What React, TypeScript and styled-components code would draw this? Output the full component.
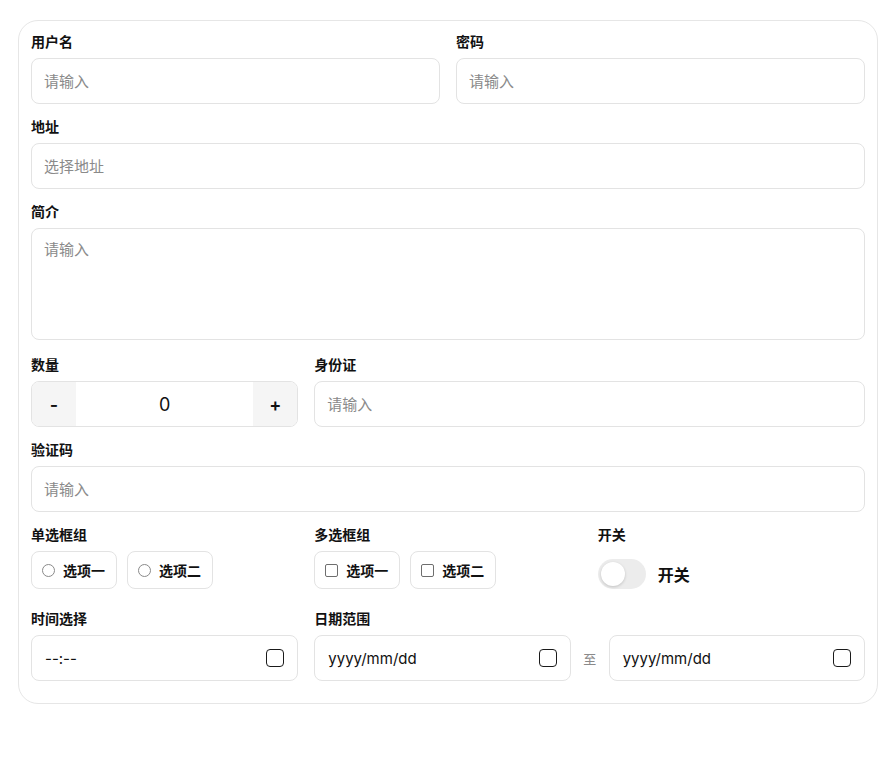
import React from "react";
import styled, { createGlobalStyle } from "styled-components";

const GlobalStyle = createGlobalStyle`
  html, body { margin: 0; padding: 0; background: #ffffff; }
  body {
    font-family: "Inter", "Noto Sans CJK SC", "Noto Sans", sans-serif;
    color: #111111;
  }
  * { box-sizing: border-box; }
  input::placeholder, textarea::placeholder { color: #8a8a8a; }
`;

const Page = styled.div`
  padding: 20px 18px;
`;

const Card = styled.form`
  width: 860px;
  border: 1px solid #e6e6e6;
  border-radius: 20px;
  padding: 12px 12px 22px;
  display: flex;
  flex-direction: column;
  gap: 14px;
`;

const Row = styled.div<{ $cols: string }>`
  display: grid;
  grid-template-columns: ${(p) => p.$cols};
  column-gap: 16px;
`;

const Field = styled.div<{ $span?: number }>`
  display: flex;
  flex-direction: column;
  min-width: 0;
  grid-column: span ${(p) => p.$span ?? 1};
`;

const Label = styled.label`
  font-size: 14px;
  line-height: 18px;
  font-weight: 700;
  margin-bottom: 7px;
  color: #111;
`;

const TextInput = styled.input`
  height: 46px;
  width: 100%;
  border: 1px solid #e3e3e3;
  border-radius: 8px;
  padding: 0 12px;
  font-family: inherit;
  font-size: 15px;
  color: #111;
  outline: none;
  background: #fff;
`;

const TextArea = styled.textarea`
  display: block;
  height: 112px;
  width: 100%;
  border: 1px solid #e3e3e3;
  border-radius: 8px;
  padding: 11px 12px;
  font-family: inherit;
  font-size: 15px;
  line-height: 20px;
  resize: none;
  outline: none;
  margin-bottom: 2px;
`;

const Stepper = styled.div`
  display: flex;
  height: 46px;
  border: 1px solid #e3e3e3;
  border-radius: 8px;
  overflow: hidden;
`;

const StepButton = styled.button`
  width: 44px;
  border: none;
  background: #f5f5f5;
  font-family: "Inter", sans-serif;
  font-size: 18px;
  font-weight: 600;
  color: #111;
  padding: 0;
`;

const StepValue = styled.input`
  flex: 1;
  min-width: 0;
  border: none;
  text-align: center;
  font-family: "Inter", sans-serif;
  font-size: 18px;
  color: #111;
  outline: none;
`;

const OptionList = styled.div`
  display: flex;
  gap: 10px;
`;

const Option = styled.label`
  height: 38px;
  display: flex;
  align-items: center;
  gap: 8px;
  padding: 0 11px 0 10px;
  border: 1px solid #e3e3e3;
  border-radius: 8px;
  font-size: 14px;
  font-weight: 700;
  color: #111;
`;

const RadioMark = styled.span`
  width: 13px;
  height: 13px;
  border-radius: 50%;
  border: 1px solid #8a8a8a;
  background: #fff;
`;

const CheckMark = styled.span`
  width: 13px;
  height: 13px;
  border-radius: 2px;
  border: 1px solid #6e6e6e;
  background: #fff;
`;

const SwitchWrap = styled.div`
  display: flex;
  align-items: center;
  gap: 12px;
  height: 45px;
  padding-top: 1px;
`;

const Track = styled.span`
  position: relative;
  width: 48px;
  height: 30px;
  border-radius: 15px;
  background: #ececec;
`;

const Thumb = styled.span`
  position: absolute;
  left: 3px;
  top: 3px;
  width: 24px;
  height: 24px;
  border-radius: 50%;
  background: #fff;
  box-shadow: 0 1px 3px rgba(0, 0, 0, 0.18);
`;

const SwitchText = styled.span`
  font-size: 16px;
  font-weight: 700;
  color: #111;
`;

const PickerBox = styled.div`
  flex: 1;
  height: 46px;
  display: flex;
  align-items: center;
  justify-content: space-between;
  border: 1px solid #e3e3e3;
  border-radius: 8px;
  padding: 0 13px 0 13px;
  font-family: "Inter", sans-serif;
  font-size: 15px;
  color: #111;
`;

const PickerIcon = styled.span`
  width: 18px;
  height: 18px;
  border: 1.5px solid #1a1a1a;
  border-radius: 4px;
`;

const Range = styled.div`
  display: flex;
  align-items: center;
  gap: 12px;
`;

const RangeSep = styled.span`
  width: 14px;
  text-align: center;
  font-size: 13px;
  color: #8a8a8a;
`;

export default function App() {
  return (
    <Page>
      <GlobalStyle />
      <Card onSubmit={(e) => e.preventDefault()}>
        <Row $cols="1fr 1fr">
          <Field>
            <Label>用户名</Label>
            <TextInput placeholder="请输入" />
          </Field>
          <Field>
            <Label>密码</Label>
            <TextInput type="password" placeholder="请输入" />
          </Field>
        </Row>
        <Row $cols="1fr">
          <Field>
            <Label>地址</Label>
            <TextInput placeholder="选择地址" />
          </Field>
        </Row>
        <Row $cols="1fr">
          <Field>
            <Label>简介</Label>
            <TextArea placeholder="请输入" />
          </Field>
        </Row>
        <Row $cols="1fr 1fr 1fr">
          <Field>
            <Label>数量</Label>
            <Stepper>
              <StepButton type="button">-</StepButton>
              <StepValue defaultValue="0" />
              <StepButton type="button">+</StepButton>
            </Stepper>
          </Field>
          <Field $span={2}>
            <Label>身份证</Label>
            <TextInput placeholder="请输入" />
          </Field>
        </Row>
        <Row $cols="1fr">
          <Field>
            <Label>验证码</Label>
            <TextInput placeholder="请输入" />
          </Field>
        </Row>
        <Row $cols="1fr 1fr 1fr">
          <Field>
            <Label>单选框组</Label>
            <OptionList>
              <Option>
                <RadioMark />
                选项一
              </Option>
              <Option>
                <RadioMark />
                选项二
              </Option>
            </OptionList>
          </Field>
          <Field>
            <Label>多选框组</Label>
            <OptionList>
              <Option>
                <CheckMark />
                选项一
              </Option>
              <Option>
                <CheckMark />
                选项二
              </Option>
            </OptionList>
          </Field>
          <Field>
            <Label>开关</Label>
            <SwitchWrap>
              <Track>
                <Thumb />
              </Track>
              <SwitchText>开关</SwitchText>
            </SwitchWrap>
          </Field>
        </Row>
        <Row $cols="1fr 1fr 1fr">
          <Field>
            <Label>时间选择</Label>
            <PickerBox>
              <span>--:--</span>
              <PickerIcon />
            </PickerBox>
          </Field>
          <Field $span={2}>
            <Label>日期范围</Label>
            <Range>
              <PickerBox>
                <span>yyyy/mm/dd</span>
                <PickerIcon />
              </PickerBox>
              <RangeSep>至</RangeSep>
              <PickerBox>
                <span>yyyy/mm/dd</span>
                <PickerIcon />
              </PickerBox>
            </Range>
          </Field>
        </Row>
      </Card>
    </Page>
  );
}
